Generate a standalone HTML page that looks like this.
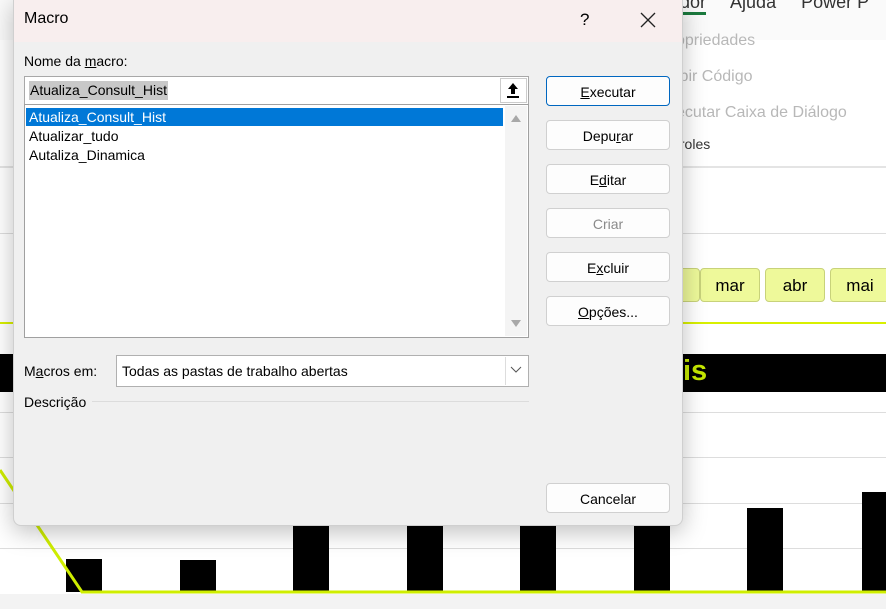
<!DOCTYPE html>
<html><head><meta charset="utf-8"><style>
*{margin:0;padding:0;box-sizing:border-box}
body{width:886px;height:609px;overflow:hidden;position:relative;background:#fff;font-family:"Segoe UI","Liberation Sans",sans-serif;font-size:14px;color:#000}
.a{position:absolute}
.bg{color:#b8b8b8;font-size:16px;white-space:nowrap}
.mb{position:absolute;top:268px;height:34px;width:60px;background:#eef99a;border:1px solid #c8d27a;border-radius:4px;font-size:17px;text-align:center;line-height:34px}
.bar{position:absolute;background:#000;width:36px;bottom:17px}
.gl{position:absolute;left:0;width:886px;height:1px;background:#ddd}
.btn{position:absolute;left:546px;width:124px;height:30px;background:#fdfdfd;border:1px solid #d0d0d0;border-radius:4px;text-align:center;line-height:30px;font-size:14px}
u{text-decoration:underline}
</style></head><body>
<div class="a" style="left:0;top:0;width:886px;height:168px;background:#fafafa"></div>
<div class="a" style="left:0;top:40px;width:886px;height:128px;background:#fff;border-bottom:2px solid #e4e4e4"></div>
<div class="a" style="left:670px;top:-8px;font-size:18px;color:#333;white-space:nowrap">edor&nbsp;&nbsp;&nbsp;&nbsp; Ajuda&nbsp;&nbsp;&nbsp;&nbsp; Power P</div>
<div class="a" style="left:670px;top:12px;width:36px;height:3px;background:#1b7a3e"></div>
<div class="a bg" style="left:676px;top:32px">opriedades</div>
<div class="a bg" style="left:676px;top:68px">ibir Código</div>
<div class="a bg" style="left:676px;top:104px">ecutar Caixa de Diálogo</div>
<div class="a" style="left:676px;top:136px;font-size:14px;color:#333">troles</div>
<div class="a" style="left:0;top:168px;width:886px;height:441px;background:#fff"></div>
<div class="gl" style="top:233px"></div>
<div class="mb" style="left:640px">&nbsp;</div>
<div class="mb" style="left:700px">mar</div>
<div class="mb" style="left:765px">abr</div>
<div class="mb" style="left:830px">mai</div>
<div class="a" style="left:0;top:322px;width:886px;height:2px;background:#d8f000"></div>
<div class="a" style="left:0;top:354px;width:886px;height:38px;background:#000"></div>
<div class="a" style="left:683px;top:355px;font-size:29px;font-weight:bold;color:#c6e800">is</div>
<div class="gl" style="top:412px"></div><div class="gl" style="top:457px"></div><div class="gl" style="top:503px"></div><div class="gl" style="top:548px"></div>
<div class="bar" style="left:66px;height:33px"></div>
<div class="bar" style="left:180px;height:32px"></div>
<div class="bar" style="left:293px;height:75px"></div>
<div class="bar" style="left:407px;height:75px"></div>
<div class="bar" style="left:520px;height:75px"></div>
<div class="bar" style="left:634px;height:75px"></div>
<div class="bar" style="left:747px;height:84px"></div>
<div class="bar" style="left:862px;height:100px"></div>
<svg class="a" style="left:0;top:440px" width="886" height="169"><path d="M0 30 L82 152 L886 152" stroke="#cfee00" stroke-width="3" fill="none"/><rect x="0" y="154" width="886" height="15" fill="#f3f3f3"/></svg>
<div class="a" style="left:13px;top:-2px;width:670px;height:528px;background:#f0f0f0;border:1px solid #cfcfcf;border-radius:0 0 8px 8px;box-shadow:0 6px 24px rgba(0,0,0,.25)"></div>
<div class="a" style="left:14px;top:0;width:668px;height:42px;background:#f8eeee"></div>
<div class="a" style="left:24px;top:10px;font-size:16px">Macro</div>
<div class="a" style="left:580px;top:10px;font-size:17px">?</div>
<svg class="a" style="left:640px;top:12px" width="16" height="16"><path d="M1 1L15 15M15 1L1 15" stroke="#222" stroke-width="1.3"/></svg>
<div class="a" style="left:24px;top:53px">Nome da <u>m</u>acro:</div>
<div class="a" style="left:24px;top:76px;width:505px;height:29px;background:#fff;border:1px solid #a8a8a8"></div>
<div class="a" style="left:29px;top:81px;background:#c8c8c8;padding:0 1px;line-height:19px">Atualiza_Consult_Hist</div>
<div class="a" style="left:500px;top:78px;width:27px;height:25px;background:#fff;border:1px solid #ccc"></div>
<svg class="a" style="left:506px;top:82px" width="14" height="17"><path d="M7 1L2 7H5V12H9V7H12Z" fill="#000"/><rect x="1" y="14" width="12" height="2" fill="#000"/></svg>
<div class="a" style="left:24px;top:104px;width:505px;height:234px;background:#fff;border:1px solid #a0a0a0"></div>
<div class="a" style="left:26px;top:108px;width:477px;height:18px;background:#0078d7"></div>
<div class="a" style="left:29px;top:108px;color:#fff;line-height:19px">Atualiza_Consult_Hist</div>
<div class="a" style="left:29px;top:127px;line-height:19px">Atualizar_tudo</div>
<div class="a" style="left:29px;top:146px;line-height:19px">Autaliza_Dinamica</div>
<div class="a" style="left:505px;top:106px;width:22px;height:230px;background:#f4f4f4"></div>
<svg class="a" style="left:509px;top:112px" width="14" height="220"><path d="M2 10L7 3L12 10Z M2 208L7 215L12 208Z" fill="#a8a8a8"/></svg>
<div class="btn" style="top:76px;border:1px solid #0067c0;background:#fdfdfd"><u>E</u>xecutar</div>
<div class="btn" style="top:120px">Depu<u>r</u>ar</div>
<div class="btn" style="top:164px">E<u>d</u>itar</div>
<div class="btn" style="top:208px;color:#8a8a8a">Criar</div>
<div class="btn" style="top:252px">E<u>x</u>cluir</div>
<div class="btn" style="top:296px"><u>O</u>pções...</div>
<div class="btn" style="top:483px">Cancelar</div>
<div class="a" style="left:24px;top:363px">M<u>a</u>cros em:</div>
<div class="a" style="left:116px;top:355px;width:413px;height:32px;background:#fff;border:1px solid #b0b0b0"></div>
<div class="a" style="left:122px;top:363px">Todas as pastas de trabalho abertas</div>
<div class="a" style="left:505px;top:357px;width:22px;height:28px;border-left:1px solid #ddd"></div>
<svg class="a" style="left:510px;top:366px" width="12" height="8"><path d="M1 1L6 6L11 1" stroke="#555" fill="none"/></svg>
<div class="a" style="left:24px;top:394px">Descrição</div>
<div class="a" style="left:92px;top:401px;width:437px;height:1px;background:#dcdcdc"></div>
</body></html>
